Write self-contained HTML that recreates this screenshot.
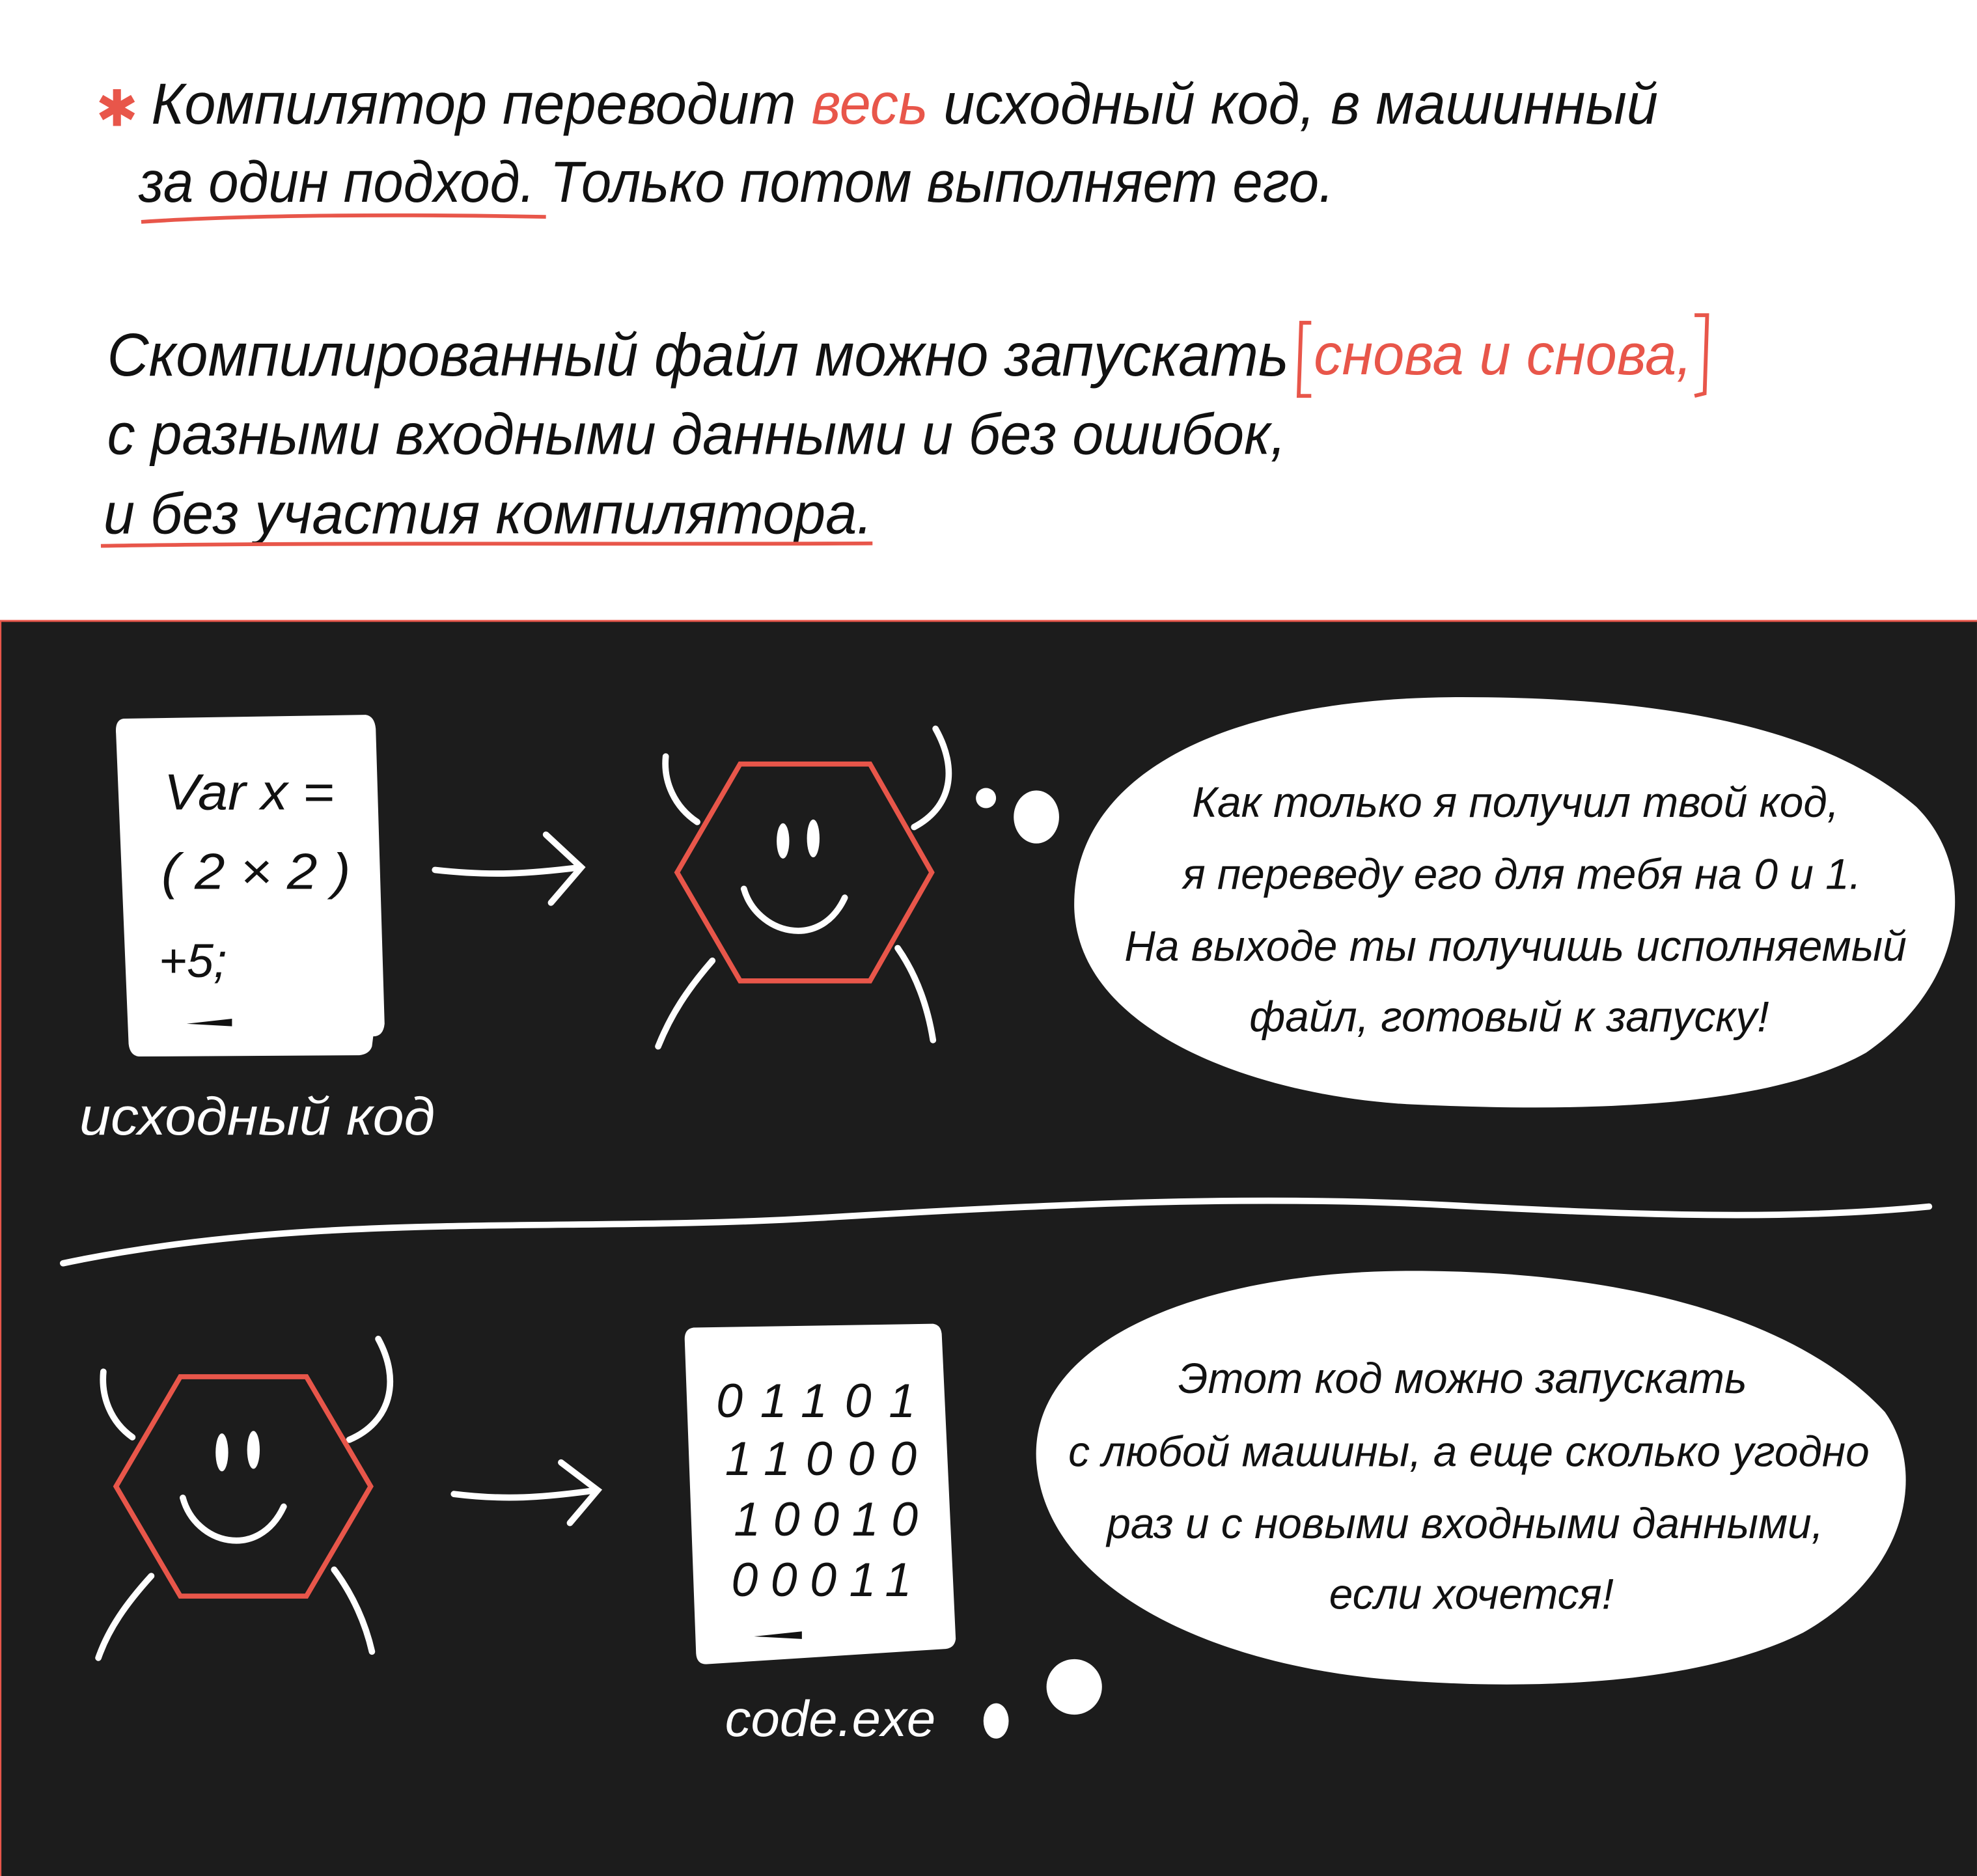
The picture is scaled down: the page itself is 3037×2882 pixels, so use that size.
<!DOCTYPE html>
<html><head><meta charset="utf-8"><style>
html,body{margin:0;padding:0;background:#fff;}
svg{display:block;}
text{font-family:"Liberation Sans","DejaVu Sans",sans-serif;font-style:italic;}
</style></head><body>
<svg width="3037" height="2882" viewBox="0 0 1568 1488" xmlns="http://www.w3.org/2000/svg">
<rect x="0" y="0" width="1568" height="1488" fill="#fff"/>
<text x="76" y="100" font-size="40" fill="#e8564a" font-style="normal">✱</text>
<text x="120" y="98" font-size="46" fill="#111" textLength="1195" lengthAdjust="spacingAndGlyphs">Компилятор переводит <tspan fill="#e8564a">весь</tspan> исходный код, в машинный</text>
<text x="110" y="160" font-size="46" fill="#111" textLength="948" lengthAdjust="spacingAndGlyphs">за один подход. Только потом выполняет его.</text>
<path d="M112,176 C200,170 330,170 433,172" stroke="#e8564a" stroke-width="3" fill="none"/>
<text x="85" y="298" font-size="48" fill="#111" textLength="937" lengthAdjust="spacingAndGlyphs">Скомпилированный файл можно запускать</text>
<path d="M1040,256 L1032,256 L1030,314 L1040,314" stroke="#e8564a" stroke-width="3" fill="none"/>
<text x="1042" y="297" font-size="46" fill="#e8564a" textLength="300" lengthAdjust="spacingAndGlyphs">снова и снова,</text>
<path d="M1344,250 L1354,250 L1352,312 L1344,314" stroke="#e8564a" stroke-width="3" fill="none"/>
<text x="85" y="360" font-size="46" fill="#111" textLength="935" lengthAdjust="spacingAndGlyphs">с разными входными данными и без ошибок,</text>
<text x="82" y="423" font-size="46" fill="#111" textLength="610" lengthAdjust="spacingAndGlyphs">и без участия компилятора.</text>
<path d="M80,433 C250,430 500,432 692,431" stroke="#e8564a" stroke-width="3" fill="none"/>
<rect x="0" y="492" width="1568" height="996" fill="#1c1c1c"/>
<line x1="0" y1="492.5" x2="1568" y2="492.5" stroke="#e8564a" stroke-width="1.5"/>
<line x1="0.5" y1="492" x2="0.5" y2="1488" stroke="#e8564a" stroke-width="1.2"/>
<path d="M98,570 L290,567 Q297,568 298,578 L305,812 Q304,822 296,822 L295,830 Q293,836 285,837 L110,838 Q103,837 102,828 L92,582 Q91,571 98,570 Z" fill="#fff"/>
<text x="130" y="642" font-size="40" fill="#111" font-style="normal" textLength="135" lengthAdjust="spacingAndGlyphs">Var x =</text>
<text x="128" y="705" font-size="40" fill="#111" font-style="normal" textLength="150" lengthAdjust="spacingAndGlyphs">( 2 × 2 )</text>
<text x="126" y="775" font-size="38" fill="#111" font-style="normal">+5;</text>
<path d="M148,812 L184,808 L184,814 Z" fill="#111"/>
<g stroke="#fff" stroke-width="5" fill="none" stroke-linecap="round">
<path d="M345,690 C390,695 420,693 460,688"/>
<path d="M433,662 L461,688 L437,716"/>
<path d="M528,600 C526,620 535,640 553,652"/>
<path d="M742,578 C760,610 755,640 725,656"/>
<path d="M565,762 C545,785 532,805 522,830"/>
<path d="M712,752 C728,775 736,800 740,825"/>
<path d="M590,705 C600,740 650,755 670,712"/>
</g>
<polygon points="537,692 587,606 690,606 739,692 690,778 587,778" fill="none" stroke="#e8564a" stroke-width="4"/>
<ellipse cx="621" cy="667" rx="5" ry="14" fill="#fff"/>
<ellipse cx="645" cy="665" rx="5" ry="15" fill="#fff"/>
<circle cx="782" cy="633" r="8" fill="#fff"/>
<ellipse cx="822" cy="648" rx="18" ry="21" fill="#fff"/>
<path d="M852,720 C850,620 960,555 1150,553 C1330,552 1450,580 1520,640 C1570,690 1560,780 1480,835 C1400,880 1250,882 1120,876 C1000,870 855,820 852,720 Z" fill="#fff"/>
<g font-size="34" fill="#111" text-anchor="middle">
<text x="1202" y="648">Как только я получил твой код,</text>
<text x="1207" y="705">я переведу его для тебя на 0 и 1.</text>
<text x="1202" y="762">На выходе ты получишь исполняемый</text>
<text x="1197" y="818">файл, готовый к запуску!</text>
</g>
<text x="63" y="900" font-size="42" fill="#fff" textLength="282" lengthAdjust="spacingAndGlyphs">исходный код</text>
<path d="M50,1002 C250,960 450,978 650,966 C850,954 1000,948 1150,956 C1300,964 1420,968 1530,957" stroke="#fff" stroke-width="5" fill="none" stroke-linecap="round"/>
<g stroke="#fff" stroke-width="5" fill="none" stroke-linecap="round">
<path d="M82,1088 C80,1108 88,1128 105,1140"/>
<path d="M300,1062 C318,1095 310,1128 277,1142"/>
<path d="M120,1250 C100,1272 86,1292 78,1315"/>
<path d="M265,1245 C280,1265 290,1288 295,1310"/>
<path d="M145,1188 C155,1225 205,1238 225,1195"/>
<path d="M360,1185 C400,1190 430,1188 473,1182"/>
<path d="M445,1160 L474,1182 L452,1208"/>
</g>
<polygon points="92,1179 143,1092 243,1092 294,1179 243,1266 143,1266" fill="none" stroke="#e8564a" stroke-width="4"/>
<ellipse cx="176" cy="1152" rx="5" ry="15" fill="#fff"/>
<ellipse cx="201" cy="1150" rx="5" ry="15" fill="#fff"/>
<path d="M550,1053 L740,1050 Q747,1051 747,1060 L758,1300 Q757,1308 748,1308 L560,1320 Q552,1320 552,1310 L543,1062 Q543,1054 550,1053 Z" fill="#fff"/>
<g font-size="38" fill="#111" font-style="normal" font-family="Liberation Sans">
<text x="568" y="1124" textLength="158" lengthAdjust="spacing">01101</text>
<text x="575" y="1170" textLength="152" lengthAdjust="spacing">11000</text>
<text x="582" y="1218" textLength="146" lengthAdjust="spacing">10010</text>
<text x="580" y="1266" textLength="143" lengthAdjust="spacing">00011</text>
</g>
<path d="M598,1298 L636,1294 L636,1300 Z" fill="#111"/>
<text x="575" y="1377" font-size="40" fill="#fff" textLength="167" lengthAdjust="spacingAndGlyphs">code.exe</text>
<ellipse cx="790" cy="1365" rx="10" ry="14" fill="#fff"/>
<circle cx="852" cy="1338" r="22" fill="#fff"/>
<path d="M822,1160 C815,1060 960,1008 1120,1008 C1300,1008 1430,1050 1495,1120 C1530,1170 1510,1250 1430,1295 C1350,1335 1220,1342 1100,1332 C960,1320 830,1260 822,1160 Z" fill="#fff"/>
<g font-size="34" fill="#111" text-anchor="middle">
<text x="1160" y="1105">Этот код можно запускать</text>
<text x="1165" y="1163">с любой машины, а еще сколько угодно</text>
<text x="1162" y="1220">раз и с новыми входными данными,</text>
<text x="1167" y="1276">если хочется!</text>
</g>
</svg>
</body></html>
